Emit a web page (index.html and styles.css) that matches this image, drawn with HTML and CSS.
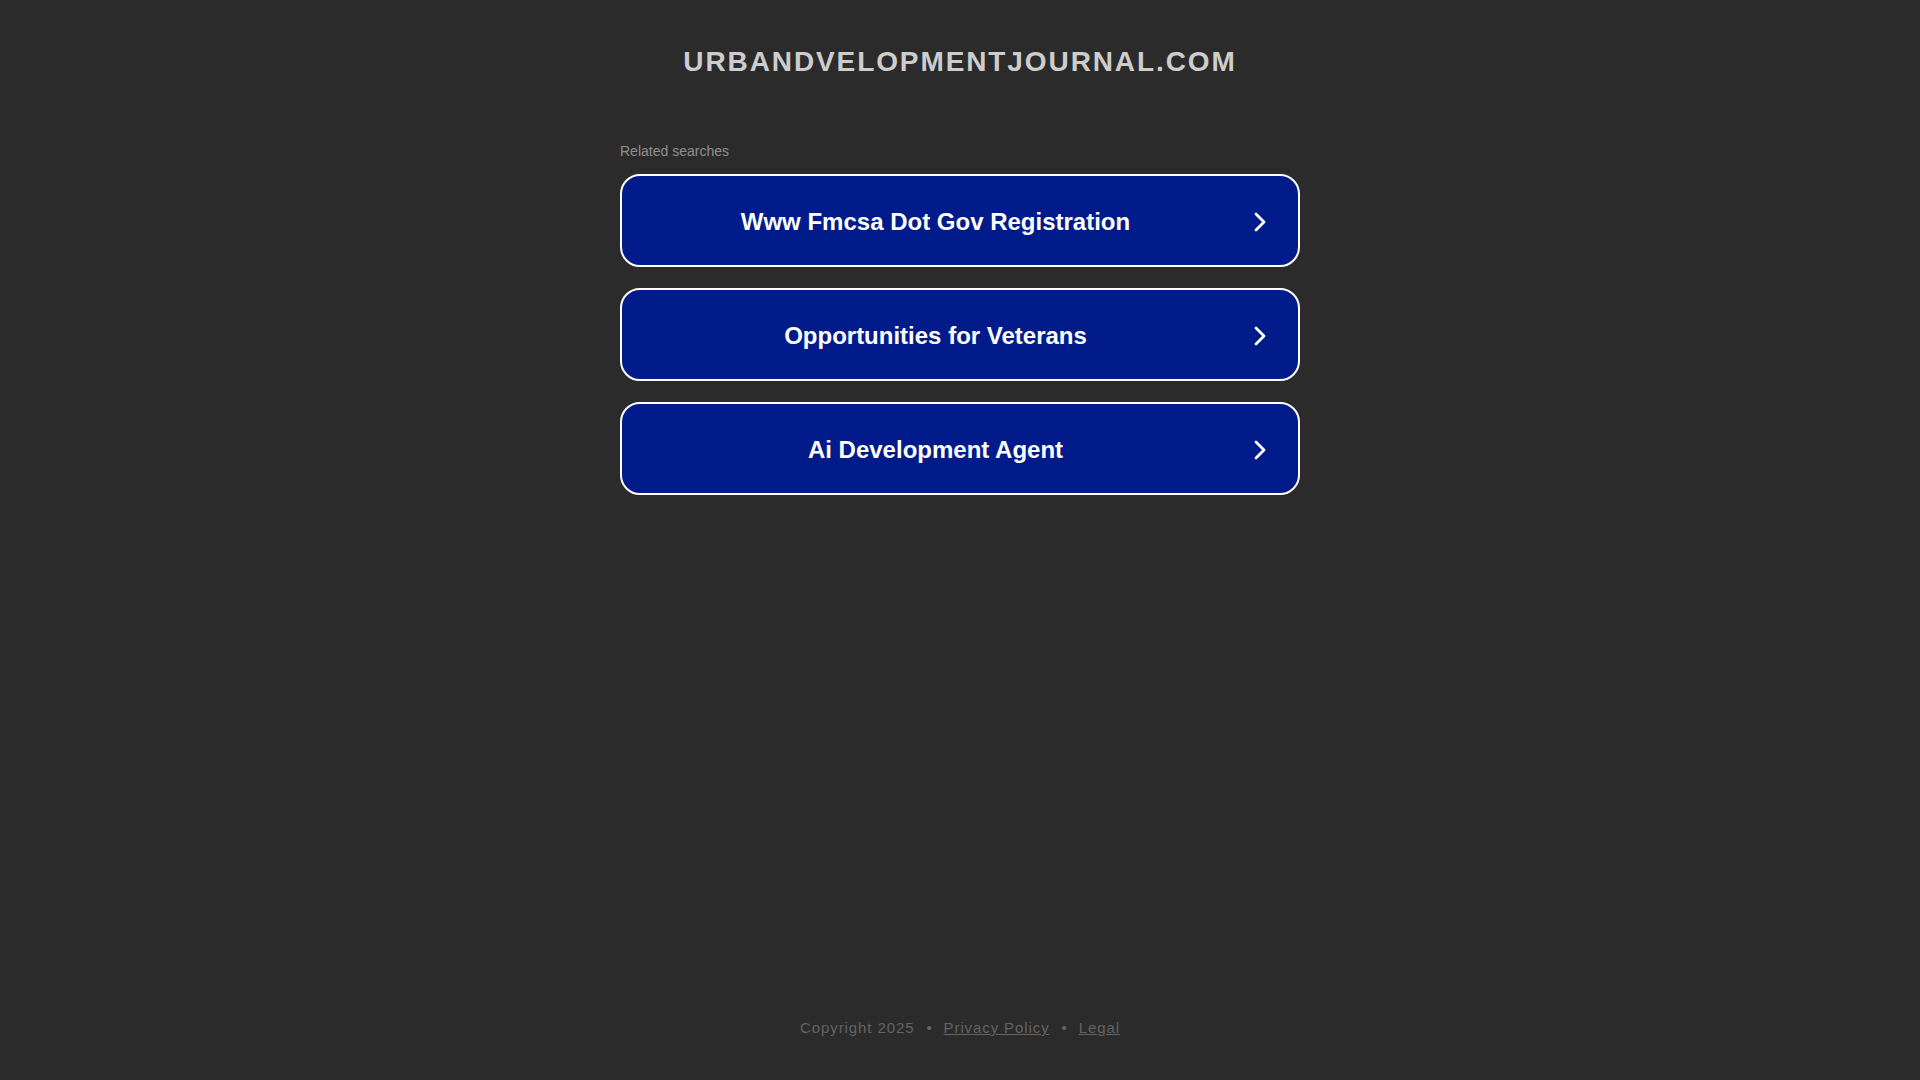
FILE: index.html
```html
<!DOCTYPE html>
<html lang="en">
<head>
<meta charset="utf-8">
<title>urbandvelopmentjournal.com</title>
<link rel="stylesheet" href="styles.css">
</head>
<body>
<div class="page">
  <header class="header">
    <h1 class="domain">urbandvelopmentjournal.com</h1>
  </header>
  <main class="content">
    <p class="related">Related searches</p>
    <ul class="links">
      <li><a class="link" href="#"><span class="link-text">Www Fmcsa Dot Gov Registration</span><svg class="chev" viewBox="0 0 12 20" width="12" height="20"><path d="M2 2 L10 10 L2 18" fill="none" stroke="#fff" stroke-width="2.8" stroke-linecap="round" stroke-linejoin="round"/></svg></a></li>
      <li><a class="link" href="#"><span class="link-text">Opportunities for Veterans</span><svg class="chev" viewBox="0 0 12 20" width="12" height="20"><path d="M2 2 L10 10 L2 18" fill="none" stroke="#fff" stroke-width="2.8" stroke-linecap="round" stroke-linejoin="round"/></svg></a></li>
      <li><a class="link" href="#"><span class="link-text">Ai Development Agent</span><svg class="chev" viewBox="0 0 12 20" width="12" height="20"><path d="M2 2 L10 10 L2 18" fill="none" stroke="#fff" stroke-width="2.8" stroke-linecap="round" stroke-linejoin="round"/></svg></a></li>
    </ul>
  </main>
  <footer class="footer">
    <span>Copyright 2025</span><span class="dot">•</span><a href="#">Privacy Policy</a><span class="dot">•</span><a href="#">Legal</a>
  </footer>
</div>
</body>
</html>
```
FILE: styles.css
```css
html, body {
  margin: 0;
  padding: 0;
  height: 100%;
}
body {
  background: #2b2b2b;
  font-family: "Liberation Sans", Arial, sans-serif;
}
.page {
  min-height: 100%;
  display: flex;
  flex-direction: column;
  align-items: center;
}
.header {
  padding-top: 46px;
}
.domain {
  margin: 0;
  font-size: 28px;
  line-height: 32px;
  font-weight: 700;
  letter-spacing: 1.9px;
  text-transform: uppercase;
  color: #cdcdcd;
  text-align: center;
}
.content {
  width: 680px;
  margin-top: 65px;
}
.related {
  margin: 0;
  font-size: 14px;
  line-height: 16px;
  color: #8f8f8f;
}
.links {
  list-style: none;
  margin: 15px 0 0;
  padding: 0;
  display: flex;
  flex-direction: column;
  gap: 21px;
}
.link {
  box-sizing: border-box;
  height: 93px;
  padding-top: 2px;
  display: flex;
  align-items: center;
  background: #011b8b;
  border: 2px solid #ffffff;
  border-radius: 20px;
  color: #fff;
  text-decoration: none;
}
.link-text {
  flex: 1;
  text-align: center;
  font-size: 24px;
  line-height: 28px;
  font-weight: 700;
}
.chev {
  flex: none;
  margin-left: 5px;
  margin-right: 32px;
}
.footer {
  margin-top: auto;
  padding-bottom: 44px;
  font-size: 15px;
  line-height: 17px;
  letter-spacing: 0.9px;
  color: #636363;
  display: flex;
  align-items: center;
}
.footer a {
  color: #636363;
}
.dot {
  margin: 0 11px 0 12px;
}
```
